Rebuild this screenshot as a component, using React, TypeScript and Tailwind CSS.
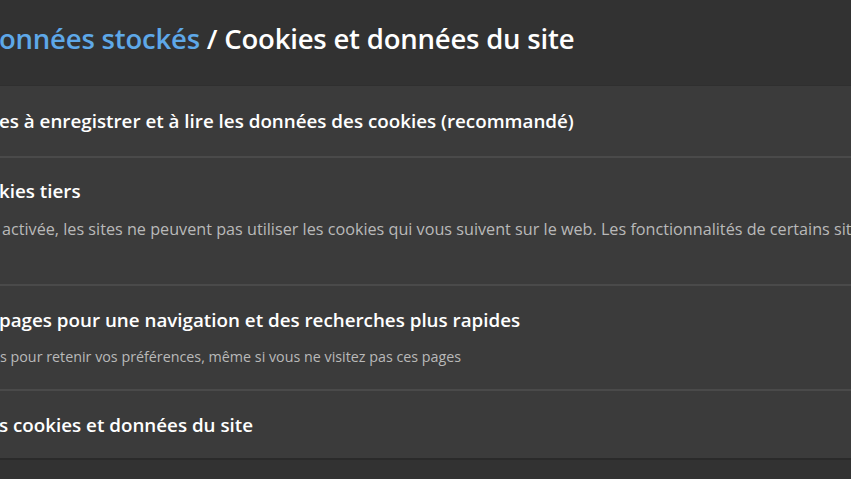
export default function App() {
  return (
    <div
      className="h-[479px] w-[851px] overflow-hidden bg-[#323232] text-white"
      style={{ fontFamily: '"Open Sans", "Noto Sans", sans-serif' }}
    >
      {/* Titre / fil d'Ariane */}
      <header className="flex h-[86px] items-center whitespace-nowrap pb-[8px]">
        <h1 className="-ml-[1px] text-[27.5px] font-semibold tracking-[-0.2px]">
          <span className="text-[#5ea8e8]">onnées stockés</span>
          <span className="text-white"> / Cookies et données du site</span>
        </h1>
      </header>

      {/* Carte des réglages */}
      <section className="whitespace-nowrap border-b-2 border-[#2a2a2a] bg-[#3b3b3b] shadow-[0_-1px_0_#2f2f2f]">
        <div className="flex h-[70px] items-center">
          <p className="-ml-[1px] text-[18.8px] font-semibold leading-[26px]">
            es à enregistrer et à lire les données des cookies (recommandé)
          </p>
        </div>

        <div className="h-[128px] border-t-2 border-[#4a4a4a] pt-[20px]">
          <p className="-ml-[1px] text-[18.8px] font-semibold leading-[26px]">kies tiers</p>
          <p className="mt-[14px] ml-[2px] text-[16.2px] leading-[22px] text-[#b9b9b9]">
            activée, les sites ne peuvent pas utiliser les cookies qui vous suivent sur le web. Les fonctionnalités de certains sites
          </p>
        </div>

        <div className="h-[105px] border-t-2 border-[#4a4a4a] pt-[21px]">
          <p className="-ml-[1px] text-[18.8px] font-semibold leading-[26px]">
            pages pour une navigation et des recherches plus rapides
          </p>
          <p className="mt-[14px] text-[14.3px] leading-[20px] text-[#b9b9b9]">
            s pour retenir vos préférences, même si vous ne visitez pas ces pages
          </p>
        </div>

        <div className="flex h-[69px] items-center border-t-2 border-[#4a4a4a]">
          <p className="-ml-[1px] text-[18.8px] font-semibold leading-[26px]">
            s cookies et données du site
          </p>
        </div>
      </section>
    </div>
  );
}
